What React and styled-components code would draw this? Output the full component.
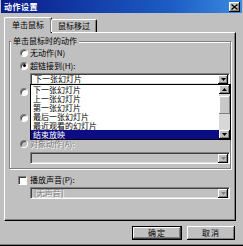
import React from "react";
import styled, { createGlobalStyle } from "styled-components";

const Global = createGlobalStyle`
  html, body { margin: 0; padding: 0; background: #c0c0c0; }
  * { box-sizing: border-box; }
`;

const Window = styled.div`
  position: relative;
  width: 243px;
  height: 246px;
  background: #c0c0c0;
  box-shadow: inset 0 -1px #000, inset 0 -2px #808080;
  display: flex;
  flex-direction: column;
  font-family: "Noto Sans CJK SC", "Noto Sans", sans-serif;
  font-size: 8px;
  line-height: 10px;
  color: #000;
`;

const TitleBar = styled.div`
  height: 13px;
  margin: 0 1px;
  background: linear-gradient(90deg, #0a1c8a 0%, #1c5cc4 70%, #3a8ae0 100%);
  display: flex;
  align-items: center;
  padding: 0 2px 0 3px;
  color: #fff;
  font-weight: bold;
`;

const TitleText = styled.span`
  flex: 1;
  letter-spacing: 0.5px;
`;

const CloseButton = styled.div`
  width: 11px;
  height: 10px;
  background: #c0c0c0;
  box-shadow: inset -1px -1px #000, inset 1px 1px #fff, inset -2px -2px #808080;
  display: flex;
  align-items: center;
  justify-content: center;
`;

const Body = styled.div`
  flex: 1;
  display: flex;
  flex-direction: column;
  padding: 3px 7px 0 4px;
`;

const TabRow = styled.div`
  display: flex;
  align-items: flex-end;
  height: 16px;
  position: relative;
  z-index: 1;
`;

const Tab = styled.div`
  height: ${(p) => (p.$active ? 16 : 13)}px;
  width: ${(p) => (p.$active ? 48 : 46)}px;
  margin-left: ${(p) => (p.$active ? 0 : -1)}px;
  margin-bottom: ${(p) => (p.$active ? -1 : 0)}px;
  background: #c0c0c0;
  border-top: 1px solid #fff;
  border-left: 1px solid #fff;
  border-right: 1px solid #000;
  box-shadow: inset -1px 0 #808080;
  border-radius: 2px 2px 0 0;
  display: flex;
  align-items: center;
  justify-content: center;
  padding-bottom: ${(p) => (p.$active ? 2 : 0)}px;
`;

const Panel = styled.div`
  position: relative;
  height: 189px;
  border-top: 1px solid #fff;
  border-left: 1px solid #fff;
  border-right: 1px solid #000;
  border-bottom: 1px solid #000;
  box-shadow: inset -1px -1px #808080;
  padding: 8px 4px 0 4px;
  display: flex;
  flex-direction: column;
`;

const Group = styled.div`
  position: relative;
  height: 128px;
  border: 1px solid #808080;
  box-shadow: inset 1px 1px #fff, 1px 1px #fff;
  padding: 5px 0 0 10px;
  display: flex;
  flex-direction: column;
`;

const Legend = styled.span`
  position: absolute;
  top: -6px;
  left: 1px;
  padding: 0 2px;
  background: #c0c0c0;
`;

const OptionRow = styled.div`
  height: ${(p) => p.$h || 12}px;
  display: flex;
  align-items: center;
  gap: ${(p) => p.$gap || 2}px;
  color: ${(p) => (p.$disabled ? "#808080" : "#000")};
  text-shadow: ${(p) => (p.$disabled ? "1px 1px #fff" : "none")};
`;

const Radio = styled.span`
  width: 8px;
  height: 8px;
  border-radius: 50%;
  background: ${(p) => (p.$disabled ? "#c0c0c0" : "#fff")};
  border: 1px solid #808080;
  border-right-color: #fff;
  border-bottom-color: #fff;
  box-shadow: inset 1px 1px #404040;
  display: flex;
  align-items: center;
  justify-content: center;
  flex: none;
  &::after {
    content: "";
    display: ${(p) => (p.$checked ? "block" : "none")};
    width: 3px;
    height: 3px;
    border-radius: 50%;
    background: #000;
  }
`;

const Checkbox = styled.span`
  width: 9px;
  height: 9px;
  background: #fff;
  border: 1px solid #808080;
  border-right-color: #fff;
  border-bottom-color: #fff;
  box-shadow: inset 1px 1px #404040;
  flex: none;
`;

const Spacer = styled.div`
  height: ${(p) => p.$h}px;
`;

const Combo = styled.div`
  height: 12px;
  width: 200px;
  margin-left: ${(p) => p.$indent || 10}px;
  margin-top: ${(p) => p.$mt || 0}px;
  background: ${(p) => (p.$disabled ? "#c0c0c0" : "#fff")};
  border: 1px solid #808080;
  border-right-color: #fff;
  border-bottom-color: #fff;
  box-shadow: inset 1px 1px #404040, inset -1px -1px #dfdfdf;
  display: flex;
  align-items: center;
  padding: 0 1px 0 3px;
  color: ${(p) => (p.$disabled ? "#808080" : "#000")};
  text-shadow: ${(p) => (p.$disabled ? "1px 1px #fff" : "none")};
`;

const ComboText = styled.span`
  flex: 1;
  white-space: nowrap;
`;

const ArrowBtn = styled.div`
  width: 10px;
  height: 9px;
  background: #c0c0c0;
  box-shadow: inset -1px -1px #000, inset 1px 1px #fff, inset -2px -2px #808080;
  display: flex;
  align-items: center;
  justify-content: center;
  flex: none;
`;

const ListBox = styled.div`
  position: absolute;
  left: 25px;
  top: 51px;
  width: 201px;
  height: 56px;
  background: #fff;
  border: 1px solid #000;
  display: flex;
  z-index: 2;
`;

const ListItems = styled.div`
  flex: 1;
  display: flex;
  flex-direction: column;
`;

const ListItem = styled.div`
  height: 9px;
  line-height: 9px;
  padding-left: 2px;
  background: ${(p) => (p.$selected ? "#0c0c84" : "transparent")};
  color: ${(p) => (p.$selected ? "#fff" : "#000")};
  white-space: nowrap;
`;

const ScrollBar = styled.div`
  width: 11px;
  display: flex;
  flex-direction: column;
  background: #d8d8d8;
`;

const ScrollBtn = styled(ArrowBtn)`
  width: 11px;
  height: 9px;
`;

const Thumb = styled.div`
  height: 18px;
  margin-top: 2px;
  background: #c8c8c8;
  box-shadow: inset -1px -1px #808080, inset 1px 1px #fff;
`;

const Track = styled.div`
  flex: 1;
`;

const SoundRow = styled.div`
  display: flex;
  flex-direction: column;
  padding: 5px 0 0 9px;
`;

const Buttons = styled.div`
  display: flex;
  justify-content: flex-end;
  gap: 5px;
  margin-top: 5px;
  margin-right: 1px;
`;

const Button = styled.div`
  width: ${(p) => (p.$default ? 50 : 48)}px;
  height: 14px;
  background: #c0c0c0;
  box-shadow: ${(p) =>
    p.$default
      ? "inset 0 0 0 1px #000, inset -2px -2px #404040, inset 2px 2px #fff, inset -3px -3px #808080"
      : "inset -1px -1px #000, inset 1px 1px #fff, inset -2px -2px #808080"};
  display: flex;
  align-items: center;
  justify-content: center;
  letter-spacing: 1px;
`;

const Arrow = ({ up, color = "#000" }) => (
  <svg width="5" height="3" viewBox="0 0 5 3">
    <path d={up ? "M2.5 0 L5 3 L0 3 Z" : "M0 0 L5 0 L2.5 3 Z"} fill={color} />
  </svg>
);

const items = ["下一张幻灯片", "上一张幻灯片", "第一张幻灯片", "最后一张幻灯片", "最近观看的幻灯片", "结束放映"];

export default function App() {
  return (
    <>
      <Global />
      <Window>
        <TitleBar>
          <TitleText>动作设置</TitleText>
          <CloseButton>
            <svg width="7" height="6" viewBox="0 0 7 6">
              <path d="M0.5 0.5 L6.5 5.5 M6.5 0.5 L0.5 5.5" stroke="#000" strokeWidth="1.3" />
            </svg>
          </CloseButton>
        </TitleBar>
        <Body>
          <TabRow>
            <Tab $active>单击鼠标</Tab>
            <Tab>鼠标移过</Tab>
          </TabRow>
          <Panel>
            <Group>
              <Legend>单击鼠标时的动作</Legend>
              <OptionRow>
                <Radio />
                <span>无动作(N)</span>
              </OptionRow>
              <OptionRow $h={13}>
                <Radio $checked />
                <span>超链接到(H):</span>
              </OptionRow>
              <Combo $mt={1}>
                <ComboText>下一张幻灯片</ComboText>
                <ArrowBtn>
                  <Arrow />
                </ArrowBtn>
              </Combo>
              <OptionRow $h={14}>
                <Radio />
              </OptionRow>
              <Spacer $h={12} />
              <OptionRow $h={14}>
                <Radio />
              </OptionRow>
              <Spacer $h={12} />
              <OptionRow $h={14} $disabled>
                <Radio $disabled />
                <span>对象动作(A):</span>
              </OptionRow>
              <Combo $disabled $mt={1}>
                <ComboText />
                <ArrowBtn>
                  <Arrow color="#808080" />
                </ArrowBtn>
              </Combo>
            </Group>
            <ListBox>
              <ListItems>
                {items.map((t, i) => (
                  <ListItem key={t} $selected={i === items.length - 1}>
                    {t}
                  </ListItem>
                ))}
              </ListItems>
              <ScrollBar>
                <ScrollBtn>
                  <Arrow up />
                </ScrollBtn>
                <Thumb />
                <Track />
                <ScrollBtn>
                  <Arrow />
                </ScrollBtn>
              </ScrollBar>
            </ListBox>
            <SoundRow>
              <OptionRow $h={12} $gap={3}>
                <Checkbox />
                <span>播放声音(P):</span>
              </OptionRow>
              <Combo $disabled $indent={12} $mt={1}>
                <ComboText>[无声音]</ComboText>
                <ArrowBtn>
                  <Arrow color="#808080" />
                </ArrowBtn>
              </Combo>
            </SoundRow>
          </Panel>
          <Buttons>
            <Button $default>确定</Button>
            <Button>取消</Button>
          </Buttons>
        </Body>
      </Window>
    </>
  );
}
